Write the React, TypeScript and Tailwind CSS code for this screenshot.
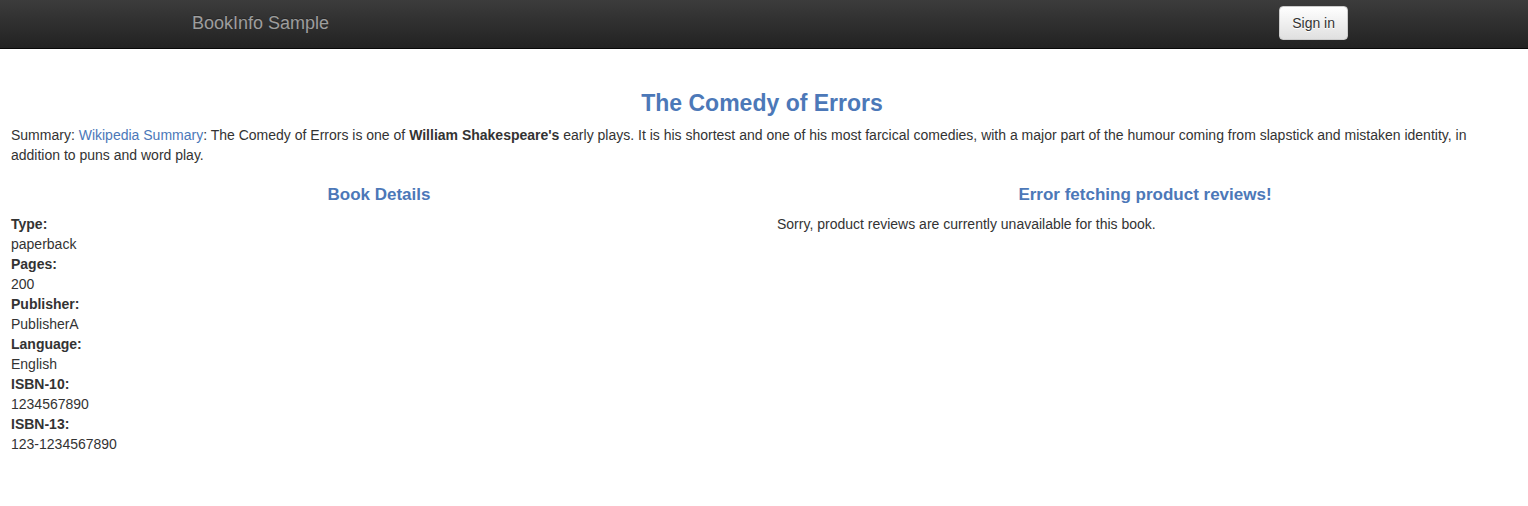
const details = [
  { label: 'Type:', value: 'paperback' },
  { label: 'Pages:', value: '200' },
  { label: 'Publisher:', value: 'PublisherA' },
  { label: 'Language:', value: 'English' },
  { label: 'ISBN-10:', value: '1234567890' },
  { label: 'ISBN-13:', value: '123-1234567890' },
];

export default function App() {
  return (
    <div className="bg-white font-['Liberation_Sans',Arial,sans-serif] text-sm leading-5 text-[#333333]">
      <nav className="border-b border-[#080808] bg-linear-to-b from-[#3c3c3c] to-[#222222]">
        <div className="mx-auto flex h-12 max-w-[1168px] items-start justify-between pl-3">
          <a href="#" className="pt-[13px] text-lg leading-5 text-[#9d9d9d] [text-shadow:0_-1px_0_rgba(0,0,0,0.25)]">
            BookInfo Sample
          </a>
          <button
            type="button"
            className="mt-[6px] rounded border border-[#cccccc] bg-linear-to-b from-white to-[#e0e0e0] px-3 py-[6px] text-sm leading-5 [text-shadow:0_1px_0_#fff]"
          >
            Sign in
          </button>
        </div>
      </nav>

      <main className="pt-[41px] pr-[15px] pl-[11px]">
        <h3 className="mb-[9px] text-center text-[23px] leading-[26px] font-bold text-[#4c78b8]">
          The Comedy of Errors
        </h3>
        <p className="mb-5">
          Summary:{' '}
          <a href="#" className="text-[#4c78b8]">
            Wikipedia Summary
          </a>
          : The Comedy of Errors is one of <b>William Shakespeare's</b> early plays. It is his shortest and one of his
          most farcical comedies, with a major part of the humour coming from slapstick and mistaken identity, in
          addition to puns and word play.
        </p>

        <div className="grid grid-cols-2 gap-[30px]">
          <section>
            <h4 className="mb-[9px] text-center text-[17px] leading-5 font-bold text-[#4c78b8]">
              Book Details
            </h4>
            <dl>
              {details.map(({ label, value }) => (
                <div key={label}>
                  <dt className="font-bold">{label}</dt>
                  <dd>{value}</dd>
                </div>
              ))}
            </dl>
          </section>
          <section>
            <h4 className="mb-[9px] text-center text-[17px] leading-5 font-bold text-[#4c78b8]">
              Error fetching product reviews!
            </h4>
            <p>Sorry, product reviews are currently unavailable for this book.</p>
          </section>
        </div>
      </main>
    </div>
  );
}
